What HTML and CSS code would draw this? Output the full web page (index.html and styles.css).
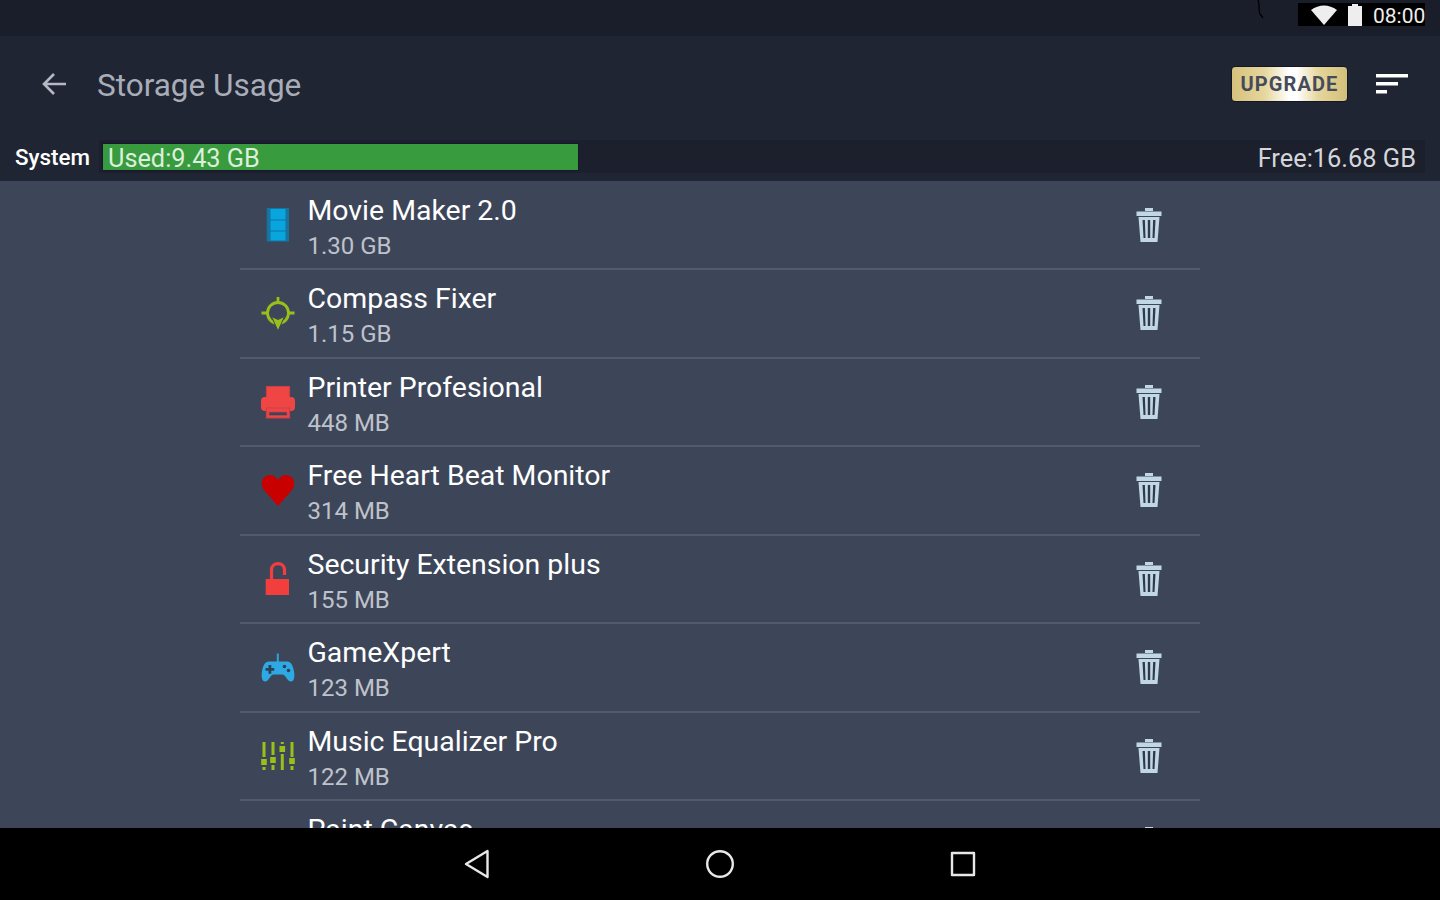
FILE: index.html
```html
<!DOCTYPE html>
<html lang="en">
<head>
<meta charset="utf-8">
<title>Storage Usage</title>
<link rel="stylesheet" href="styles.css">
</head>
<body>
<div class="screen">
  <header class="status">
    <svg class="squiggle" width="10" height="20" viewBox="0 0 10 20"><path d="M1 0C3 4 1 9 3 14L6 18" fill="none" stroke="#000" stroke-width="1.3"/></svg>
    <div class="status-box">
      <svg class="wifi" width="28" height="20" viewBox="0 0 28 20"><path d="M1 5C9-1 19-1 27 5L14 20Z" fill="#eee"/></svg>
      <svg class="battery" width="16" height="22" viewBox="0 0 16 22"><path d="M5 0h6v2h4v20H1V2h4Z" fill="#eee"/></svg>
      <span class="clock">08:00</span>
    </div>
  </header>
  <div class="appbar">
    <svg class="back" width="26" height="24" viewBox="0 0 26 24"><path d="M25 12H3M13 2 3 12l10 10" fill="none" stroke="#b6b9c2" stroke-width="2.6"/></svg>
    <h1 class="title">Storage Usage</h1>
    <div class="upgrade">UPGRADE</div>
    <svg class="sort" width="34" height="24" viewBox="0 0 34 24"><path d="M1 2h32v3.500H1ZM1 10h22v3.500H1ZM1 18h11v3.500H1Z" fill="#fff"/></svg>
  </div>
  <div class="usage">
    <span class="usage-label">System</span>
    <div class="usage-track">
      <div class="usage-used">Used:9.43 GB</div>
      <div class="usage-free">Free:16.68 GB</div>
    </div>
  </div>
  <main class="list">
    <div class="rows">
      <div class="row">
        <svg class="appicon" width="36" height="36" viewBox="0 0 36 36"><path d="M6.700 1H29v33.500H6.700Z" fill="#17739f"/><path d="M10.500 2h15v10.500h-15ZM10.500 13.500h15v10h-15ZM10.500 24.500h15v9h-15Z" fill="#09a5df"/></svg>
        <div class="info"><div class="name">Movie Maker 2.0</div><div class="size">1.30 GB</div></div>
        <svg class="trash" width="28" height="36" viewBox="0 0 28 36"><use href="#trash"/></svg>
      </div>
      <div class="row">
        <svg class="appicon" width="36" height="36" viewBox="0 0 36 36"><circle cx="18" cy="18" r="10.500" fill="none" stroke="#97c11a" stroke-width="2.800"/><path d="M18 2v6M1.500 18h6M28.500 18h6" stroke="#97c11a" stroke-width="2.800"/><path d="M11.500 21.500l6.500 3 6.500-3L18 36Z" fill="#97c11a" stroke="#3d4659" stroke-width="1"/></svg>
        <div class="info"><div class="name">Compass Fixer</div><div class="size">1.15 GB</div></div>
        <svg class="trash" width="28" height="36" viewBox="0 0 28 36"><use href="#trash"/></svg>
      </div>
      <div class="row">
        <svg class="appicon" width="36" height="36" viewBox="0 0 36 36"><path d="M6.500 2.500h23v13h-23Z" fill="#f04545" stroke="#c94046" stroke-width="1.200"/><path d="M5 13h26a4 4 0 0 1 4 4v6a4 4 0 0 1-4 4H5a4 4 0 0 1-4-4v-6a4 4 0 0 1 4-4Z" fill="#f04545"/><path d="M6.500 24h23v10h-23Z" fill="#f04545" stroke="#c94046" stroke-width="1.200"/><path d="M9 28h18v3.500H9Z" fill="#3d4659" stroke="#c94046" stroke-width=".8"/></svg>
        <div class="info"><div class="name">Printer Profesional</div><div class="size">448 MB</div></div>
        <svg class="trash" width="28" height="36" viewBox="0 0 28 36"><use href="#trash"/></svg>
      </div>
      <div class="row">
        <svg class="appicon" width="36" height="36" viewBox="0 0 36 36"><path d="M18 34 4 18C-1 11 3 3 10 3c4 0 6 2 8 5 2-3 4-5 8-5 7 0 11 8 6 15Z" fill="#c90000"/></svg>
        <div class="info"><div class="name">Free Heart Beat Monitor</div><div class="size">314 MB</div></div>
        <svg class="trash" width="28" height="36" viewBox="0 0 28 36"><use href="#trash"/></svg>
      </div>
      <div class="row">
        <svg class="appicon" width="36" height="36" viewBox="0 0 36 36"><path d="M5.700 18H29v16H5.700Z" fill="#f33e3e"/><path d="M11.500 18V9c0-8.500 13-8.500 13 0v5" fill="none" stroke="#f33e3e" stroke-width="3.200"/></svg>
        <div class="info"><div class="name">Security Extension plus</div><div class="size">155 MB</div></div>
        <svg class="trash" width="28" height="36" viewBox="0 0 28 36"><use href="#trash"/></svg>
      </div>
      <div class="row">
        <svg class="appicon" width="36" height="36" viewBox="0 0 36 36"><path d="M16.800 4.500h2v9h-2Z" fill="#2aa4dc"/><path d="M9 12.500h18c4 0 6 4 7 10 1 5 0 10-3 10-4 0-5-7-9-7h-8c-4 0-5 7-9 7-3 0-4-5-3-10 1-6 3-10 7-10Z" fill="#2ea9e3"/><path d="M8.500 16h2.800v3h3v2.800h-3v3H8.500v-3h-3V19h3Z" fill="#2c4058"/><circle cx="24.500" cy="17.500" r="1.800" fill="#2c4058"/><circle cx="28.500" cy="21.500" r="1.800" fill="#2c4058"/></svg>
        <div class="info"><div class="name">GameXpert</div><div class="size">123 MB</div></div>
        <svg class="trash" width="28" height="36" viewBox="0 0 28 36"><use href="#trash"/></svg>
      </div>
      <div class="row">
        <svg class="appicon" width="36" height="36" viewBox="0 0 36 36"><path d="M2.500 4h3v15h-3ZM1.200 21h5.600v6H1.200ZM2.500 29h3v3h-3ZM11.500 4h3v13h-3ZM10.200 19h5.600v6h-5.600ZM11.500 27h3v5h-3ZM20.800 4h3v2h-3ZM19.500 8h5.600v6h-5.600ZM20.800 16h3v16h-3ZM30.500 4h3v15h-3ZM29.200 20h5.600v6h-5.600ZM30.500 28h3v4h-3Z" fill="#97c11a"/></svg>
        <div class="info"><div class="name">Music Equalizer Pro</div><div class="size">122 MB</div></div>
        <svg class="trash" width="28" height="36" viewBox="0 0 28 36"><use href="#trash"/></svg>
      </div>
      <div class="row">
        <svg class="appicon" width="36" height="36" viewBox="0 0 36 36"></svg>
        <div class="info"><div class="name">Paint Canvas</div><div class="size">98 MB</div></div>
        <svg class="trash" width="28" height="36" viewBox="0 0 28 36"><use href="#trash"/></svg>
      </div>
    </div>
  </main>
  <nav class="navbar">
    <svg width="28" height="30" viewBox="0 0 28 30"><path d="M24.500 2v26L3 15Z" fill="none" stroke="#e8e8e8" stroke-width="2.400" stroke-linejoin="round"/></svg>
    <svg width="30" height="30" viewBox="0 0 30 30"><circle cx="15" cy="15" r="12.800" fill="none" stroke="#e8e8e8" stroke-width="2.400"/></svg>
    <svg width="28" height="28" viewBox="0 0 28 28"><path d="M3 3h22v22H3Z" fill="none" stroke="#e8e8e8" stroke-width="2.400" stroke-linejoin="round"/></svg>
  </nav>
</div>
<svg class="defs" width="0" height="0">
  <symbol id="trash" viewBox="0 0 28 36">
    <path d="M10 1h8v3h-8ZM1.500 4.500h25V9h-25ZM3.500 10h21l-2 25H5.500Z" fill="#c2d7e6"/>
    <path d="M7.500 13h2.400l.6 18H8.500ZM12.800 13h2.400v18h-2.400ZM18.100 13h2.400l-1 18h-2Z" fill="#2f3a4e"/>
  </symbol>
</svg>
</body>
</html>
```
FILE: styles.css
```css
* { box-sizing: border-box; }
html, body { margin: 0; height: 100%; }
body { font-family: Roboto, "Liberation Sans", sans-serif; background: #000; overflow: hidden; }
.screen { width: 1440px; height: 900px; display: flex; flex-direction: column; }
.status { height: 36px; flex: none; background: #191e2a; display: flex; justify-content: flex-end; align-items: flex-start; padding: 3px 15px 0 0; position: relative; }
.squiggle { position: absolute; left: 1257px; top: 0; }
.status-box { height: 23px; width: 127px; background: #000; display: flex; align-items: center; padding-left: 12px; }
.status-box svg { flex: none; }
.wifi { margin-right: 9px; }
.battery { margin-right: 10px; }
.clock { color: #eee; font-size: 21px; line-height: 23px; margin-top: 3px; flex: none; }
.appbar { height: 102px; flex: none; background: #1f2533; display: flex; align-items: center; padding: 0 31px 0 41px; }
.back { flex: none; margin-top: -6px; }
.title { margin: -4px 0 0 30px; flex: 1; color: #a9adb8; font-size: 31.500px; font-weight: 400; }
.upgrade { width: 117px; height: 36px; margin: -7px 27px 0 0; border: 1px solid #12162a; border-radius: 4px; background: linear-gradient(90deg, #d6c27c 0%, #e6d69c 28%, #fff 50%, #fff 56%, #e6d69c 75%, #d3bf78 100%); color: #454b5c; font-size: 20px; font-weight: 700; letter-spacing: 1.100px; display: flex; align-items: center; justify-content: center; }
.sort { flex: none; margin-top: -6px; }
.usage { height: 43px; flex: none; background: #1f2533; display: flex; align-items: flex-start; padding: 2px 15px 0 15px; }
.usage-label { color: #fff; font-size: 22.400px; font-weight: 500; line-height: 35px; width: 84px; flex: none; }
.usage-track { flex: 1; height: 33px; background: #1b202c; padding: 4px 0 3px 4px; display: flex; justify-content: space-between; }
.usage-used { width: 475px; height: 26px; background: #389b3e; box-shadow: 0 0 0 1px #1b1535; color: #dcefdc; font-size: 25.300px; line-height: 29px; padding-left: 5px; }
.usage-free { color: #d4d6db; font-size: 25.400px; line-height: 29px; padding-right: 9px; }
.list { flex: 1; min-height: 0; overflow: hidden; background: #3d4659; }
.rows { width: 960px; margin: 0 auto; padding-top: 0.500px; }
.row { height: 88.500px; border-bottom: 2px solid #525a6c; display: flex; align-items: center; padding: 0 24px 0 20px; }
.appicon { flex: none; margin: 0 11.500px 0 0; }
.info { flex: 1; padding-top: 6px; }
.name { color: #fff; font-size: 28.450px; line-height: 36px; }
.size { color: #bfc2ca; font-size: 24px; line-height: 34px; }
.trash { flex: none; margin-right: 13px; }
.navbar { height: 72px; flex: none; background: #000; display: flex; align-items: center; justify-content: center; gap: 214px; }
.defs { position: absolute; }
```
